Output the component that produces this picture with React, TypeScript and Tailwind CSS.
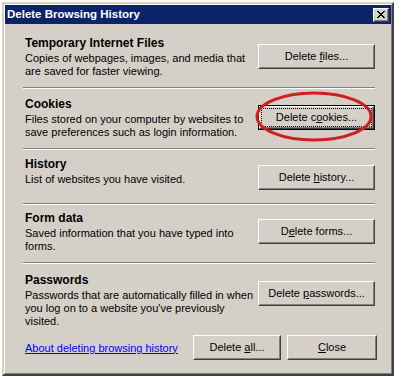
import type { ReactNode } from 'react'

const font = "font-['Liberation_Sans',Arial,sans-serif]"

function ClassicButton({
  children,
  className,
  isDefault,
}: {
  children: ReactNode
  className: string
  isDefault?: boolean
}) {
  return (
    <div className={'h-[25px] shrink-0 text-black ' + className + (isDefault ? ' border border-black' : '')}>
      <div className="flex h-full w-full border border-t-white border-l-white border-r-[#404040] border-b-[#404040]">
        <div className="flex flex-1 border border-t-[#d4d0c8] border-l-[#d4d0c8] border-r-[#808080] border-b-[#808080]">
          <div
            className={
              'flex flex-1 items-center justify-center border ' +
              (isDefault ? 'border-dotted border-black' : 'border-transparent')
            }
          >
            <span className="whitespace-pre">{children}</span>
          </div>
        </div>
      </div>
    </div>
  )
}

function Separator() {
  return <div className="h-[2px] border-t border-t-[#808080] border-b border-b-white" />
}

function Section({
  title,
  lines,
  button,
  className,
}: {
  title: string
  lines: ReactNode
  button: ReactNode
  className: string
}) {
  return (
    <div className={'flex ' + className}>
      <div className="flex-1 pl-[2px]">
        <div className="text-[12px] font-bold leading-[13px]">{title}</div>
        <div className="mt-[2px] whitespace-nowrap leading-[13px]">{lines}</div>
      </div>
      <div className="pt-[7px]">{button}</div>
    </div>
  )
}

function CloseGlyph() {
  const rects = [
    [0, 0, 2], [6, 0, 2],
    [1, 1, 2], [5, 1, 2],
    [2, 2, 4],
    [3, 3, 2],
    [2, 4, 4],
    [1, 5, 2], [5, 5, 2],
    [0, 6, 2], [6, 6, 2],
  ]
  return (
    <svg width="8" height="7" viewBox="0 0 8 7" shapeRendering="crispEdges">
      {rects.map(([x, y, w], i) => (
        <rect key={i} x={x} y={y} width={w} height={1} fill="#000" />
      ))}
    </svg>
  )
}

export default function App() {
  return (
    <div className={'relative h-[381px] w-[402px] overflow-hidden bg-white pl-[2px] pt-[2px] text-[11px] text-black ' + font}>
      <div className="flex h-[374px] w-[392px] flex-col border-2 border-t-[#d4d0c8] border-l-[#d4d0c8] border-r-[#404040] border-b-[#404040]">
        <div className="flex flex-1 flex-col border-[1px] border-t-white border-l-white border-r-[#808080] border-b-[#808080] bg-[#d4d0c8]">
          {/* title bar */}
          <div className="flex h-[19px] items-center justify-between bg-[#0a246a] pl-[2px] pr-[2px]">
            <span className="text-[11.5px] font-bold leading-[13px] text-white">Delete Browsing History</span>
            <div className="flex h-[14px] w-[16px] border border-t-white border-l-white border-r-[#404040] border-b-[#404040]">
              <div className="flex flex-1 items-center justify-center border border-t-[#d4d0c8] border-l-[#d4d0c8] border-r-[#808080] border-b-[#808080] bg-[#d4d0c8]">
                <CloseGlyph />
              </div>
            </div>
          </div>

          {/* content */}
          <div className="pl-[18px] pr-[16px] pt-[13px]">
            <Section
              className="h-[50px]"
              title="Temporary Internet Files"
              lines={<>Copies of webpages, images, and media that<br />are saved for faster viewing.</>}
              button={<ClassicButton className="w-[117px]">Delete <u>f</u>iles...</ClassicButton>}
            />
            <Separator />
            <Section
              className="h-[59px] pt-[9px]"
              title="Cookies"
              lines={<>Files stored on your computer by websites to<br />save preferences such as login information.</>}
              button={<ClassicButton className="w-[117px]" isDefault>Delete c<u>o</u>okies...</ClassicButton>}
            />
            <Separator />
            <Section
              className="h-[53px] pt-[8px]"
              title="History"
              lines={<>List of websites you have visited.</>}
              button={<ClassicButton className="w-[117px]">Delete <u>h</u>istory...</ClassicButton>}
            />
            <Separator />
            <Section
              className="h-[57px] pt-[7px]"
              title="Form data"
              lines={<>Saved information that you have typed into<br />forms.</>}
              button={<ClassicButton className="w-[117px]">D<u>e</u>lete forms...</ClassicButton>}
            />
            <Separator />
            <Section
              className="pt-[10px]"
              title="Passwords"
              lines={<>Passwords that are automatically filled in when<br />you log on to a website you've previously<br />visited.</>}
              button={<ClassicButton className="w-[117px]">Delete <u>p</u>asswords...</ClassicButton>}
            />

            {/* bottom row */}
            <div className="-mr-[2px] mt-[7px] flex items-center">
              <a className="flex-1 pl-[2px] pt-[1px] text-[#0000ff] underline">About deleting browsing history</a>
              <div className="flex gap-[6px]">
                <ClassicButton className="w-[88px]">Delete <u>a</u>ll...</ClassicButton>
                <ClassicButton className="w-[90px]"><u>C</u>lose</ClassicButton>
              </div>
            </div>
          </div>
        </div>
      </div>

      {/* red annotation ellipse */}
      <svg className="absolute left-[254px] top-[90px]" width="122" height="54" viewBox="0 0 122 54">
        <ellipse cx="60" cy="26.5" rx="57" ry="23.5" fill="none" stroke="#cf1f1f" strokeWidth="3" />
      </svg>
    </div>
  )
}
